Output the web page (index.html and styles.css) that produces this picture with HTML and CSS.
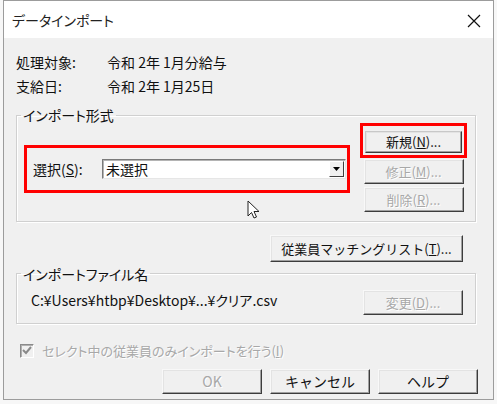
FILE: index.html
```html
<!DOCTYPE html>
<html lang="ja">
<head>
    <meta charset="UTF-8">
    <meta name="viewport" content="width=device-width, initial-scale=1.0">
    <title>データインポート</title>
    <link rel="stylesheet" href="styles.css">
</head>
<body>
    <div class="window">
        <div class="titlebar">
            <span class="title">データインポート</span>
            <span class="close">
                <svg width="14" height="14" viewBox="0 0 14 14">
                    <path d="M1 1 L13 13 M13 1 L1 13" stroke="#111" stroke-width="1.2" fill="none"/>
                </svg>
            </span>
        </div>
        <div class="content">
            <div class="info-row"><span class="info-label">処理対象:</span><span class="info-value">令和 2年 1月分給与</span></div>
            <div class="info-row"><span class="info-label">支給日:</span><span class="info-value">令和 2年 1月25日</span></div>

            <fieldset class="group group-format">
                <legend>インポート形式</legend>
                <div class="format-row">
                    <div class="highlight select-box">
                        <label class="select-label">選択(<u>S</u>):</label>
                        <div class="combo">
                            <span class="combo-text">未選択</span>
                            <span class="combo-btn">
                                <svg width="7" height="4" viewBox="0 0 7 4"><path d="M0 0 L7 0 L3.5 4 Z" fill="#000"/></svg>
                            </span>
                        </div>
                    </div>
                    <div class="side-buttons">
                        <div class="highlight new-box">
                            <button class="btn btn-new">新規(<u>N</u>)...</button>
                        </div>
                        <button class="btn btn-side btn-edit" disabled>修正(<u>M</u>)...</button>
                        <button class="btn btn-side btn-delete" disabled>削除(<u>R</u>)...</button>
                    </div>
                </div>
            </fieldset>

            <div class="matching-row">
                <button class="btn btn-matching">従業員マッチングリスト(<u>T</u>)...</button>
            </div>

            <fieldset class="group group-file">
                <legend>インポートファイル名</legend>
                <div class="file-row">
                    <span class="file-path">C:¥Users¥htbp¥Desktop¥...¥クリア.csv</span>
                    <button class="btn btn-change" disabled>変更(<u>D</u>)...</button>
                </div>
            </fieldset>

            <div class="check-row">
                <span class="checkbox">
                    <svg width="10" height="9" viewBox="0 0 10 9"><path d="M1 4 L4 7 L9 1" stroke="#8a8a8a" stroke-width="2" fill="none"/></svg>
                </span>
                <span class="check-text">セレクト中の従業員のみインポートを行う(<u>I</u>)</span>
            </div>

            <div class="footer">
                <button class="btn btn-footer" disabled>OK</button>
                <button class="btn btn-footer">キャンセル</button>
                <button class="btn btn-footer">ヘルプ</button>
            </div>
        </div>

        <svg class="cursor" width="13" height="20" viewBox="0 0 13 20">
            <path d="M1 1 L1 16 L4.5 12.5 L7 18 L9.5 17 L7 11.5 L12 11.5 Z" fill="#fff" stroke="#222" stroke-width="1"/>
        </svg>
    </div>
</body>
</html>
```

FILE: styles.css
```css
body {
    margin: 0;
    background-color: #f7f7f7;
    font-family: "Noto Sans CJK JP", "Noto Sans", sans-serif;
    font-feature-settings: "palt";
    color: #111;
}
.window {
    position: relative;
    box-sizing: border-box;
    width: 491px;
    height: 400px;
    margin-left: 3px;
    background-color: #f0f0f0;
    border: 1px solid #9c9c9c;
}
.titlebar {
    display: flex;
    align-items: center;
    justify-content: space-between;
    height: 37px;
    padding: 0 12px 0 8px;
    background-color: #fff;
}
.title {
    font-size: 14px;
    color: #222;
}
.close {
    display: flex;
    padding-top: 2px;
}
.content {
    padding: 12px 17px 0 12px;
}
.info-row {
    display: flex;
    height: 24px;
    align-items: center;
    font-size: 14px;
}
.info-label {
    width: 91px;
}
.info-value {
    white-space: pre;
    font-feature-settings: normal;
}

/* group boxes */
.group {
    margin: 0;
    padding: 0;
    border: 1px solid #d0d0d0;
    box-shadow: inset 1px 1px 0 #fff, 1px 1px 0 #fff;
    min-width: 0;
}
.group legend {
    margin-left: 4px;
    padding: 0 2px;
    font-size: 14px;
    line-height: 16px;
}
.group-format {
    margin-top: 9px;
    padding-bottom: 9px;
}
.format-row {
    display: flex;
    justify-content: space-between;
    padding: 0 8px 0 7px;
}
.highlight {
    border: 3px solid #f00;
}
.select-box {
    box-sizing: border-box;
    display: flex;
    align-items: center;
    width: 326px;
    height: 48px;
    margin-top: 22px;
    padding: 0 1px 0 6px;
}
.select-label {
    font-size: 14px;
}
.combo {
    box-sizing: border-box;
    display: flex;
    align-items: center;
    justify-content: space-between;
    width: 244px;
    height: 20px;
    margin-left: auto;
    background-color: #fff;
    border: 1px solid;
    border-color: #7a7a7a #e6e6e6 #e6e6e6 #7a7a7a;
    box-shadow: inset 1px 1px 0 #b4b4b4;
}
.combo-text {
    padding-left: 3px;
    font-size: 14px;
    line-height: 18px;
}
.combo-btn {
    box-sizing: border-box;
    display: flex;
    align-items: center;
    justify-content: center;
    width: 15px;
    height: 16px;
    margin-right: 1px;
    background-color: #f0f0f0;
    border: 1px solid;
    border-color: #fff #404040 #404040 #fff;
}
.side-buttons {
    display: flex;
    flex-direction: column;
    align-items: center;
    width: 107px;
}
.new-box {
    padding: 2px;
}

/* buttons */
.btn {
    box-sizing: border-box;
    padding: 0;
    font-family: inherit;
    font-size: 13px;
    color: #111;
    background-color: #f0f0f0;
    border: 1px solid;
    border-color: #f8f8f8 #3c3c3c #3c3c3c #f8f8f8;
    box-shadow: inset -1px -1px 0 #a0a0a0, inset 1px 1px 0 #e3e3e3;
}
.btn:disabled {
    color: #a8a8a8;
    text-shadow: 1px 1px 0 #fff;
}
.btn-new {
    width: 97px;
    height: 22px;
    border-color: #c8c8c8 #3c3c3c #3c3c3c #c8c8c8;
}
.btn-side {
    width: 100px;
    height: 25px;
}
.btn-edit {
    margin-top: 1px;
}
.btn-delete {
    margin-top: 3px;
}
.matching-row {
    display: flex;
    justify-content: flex-end;
    padding-right: 13px;
    margin-top: 13px;
}
.btn-matching {
    width: 193px;
    height: 27px;
}
.group-file {
    margin-top: 4px;
}
.file-row {
    display: flex;
    align-items: center;
    justify-content: space-between;
    padding: 8px 12px 8px 14px;
}
.file-path {
    font-size: 14px;
    margin-top: -4px;
}
.btn-change {
    width: 100px;
    height: 25px;
}
.check-row {
    display: flex;
    align-items: center;
    height: 20px;
    margin-top: 17px;
    padding-left: 4px;
}
.checkbox {
    box-sizing: border-box;
    display: flex;
    align-items: center;
    justify-content: center;
    width: 14px;
    height: 14px;
    background-color: #f0f0f0;
    border: 1px solid;
    border-color: #8a8a8a #fff #fff #8a8a8a;
    box-shadow: inset 1px 1px 0 #b0b0b0;
}
.check-text {
    margin-left: 8px;
    font-size: 13px;
    color: #a8a8a8;
    text-shadow: 1px 1px 0 #fff;
}
.footer {
    display: flex;
    justify-content: flex-end;
    gap: 8px;
    margin-top: 8px;
    margin-right: -2px;
}
.btn-footer {
    width: 100px;
    height: 25px;
    font-size: 14px;
}
.cursor {
    position: absolute;
    left: 243px;
    top: 199px;
}
```
